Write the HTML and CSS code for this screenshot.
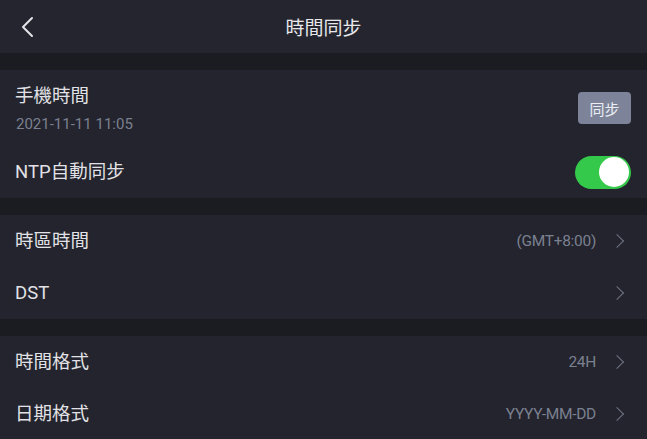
FILE: index.html
```html
<!DOCTYPE html>
<html lang="zh-Hant">
<head>
  <meta charset="UTF-8">
  <meta name="viewport" content="width=device-width, initial-scale=1.0">
  <title>時間同步</title>
  <link rel="stylesheet" href="styles.css">
</head>
<body>
  <header class="topbar">
    <button class="back" type="button" aria-label="返回">
      <svg width="14" height="22" viewBox="0 0 14 22"><path d="M12 2 L3 11 L12 20" fill="none" stroke="#e4e4e8" stroke-width="2" stroke-linecap="round" stroke-linejoin="round"/></svg>
    </button>
    <h1>時間同步</h1>
  </header>

  <main>
    <section class="group">
      <div class="row row-phone">
        <div class="info">
          <div class="label">手機時間</div>
          <div class="sub">2021-11-11 11:05</div>
        </div>
        <button class="sync" type="button">同步</button>
      </div>
      <div class="row">
        <div class="label">NTP自動同步</div>
        <span class="toggle on"><span class="knob"></span></span>
      </div>
    </section>

    <section class="group">
      <div class="row">
        <div class="label">時區時間</div>
        <div class="value">(GMT+8:00) <span class="chev"></span></div>
      </div>
      <div class="row">
        <div class="label">DST</div>
        <div class="value"><span class="chev"></span></div>
      </div>
    </section>

    <section class="group">
      <div class="row">
        <div class="label">時間格式</div>
        <div class="value">24H <span class="chev"></span></div>
      </div>
      <div class="row">
        <div class="label">日期格式</div>
        <div class="value">YYYY-MM-DD <span class="chev"></span></div>
      </div>
    </section>
  </main>
</body>
</html>
```

FILE: styles.css
```css
body {
  margin: 0;
  padding: 0;
  background-color: #1b1c22;
  color: #e6e6ea;
  font-family: Roboto, "Noto Sans CJK TC", sans-serif;
}
.topbar {
  height: 53px;
  background-color: #24252e;
  display: flex;
  align-items: center;
  justify-content: center;
  position: relative;
}
.topbar h1 {
  margin: 0;
  font-size: 19px;
  font-weight: normal;
  color: #e8e8ec;
}
.back {
  position: absolute;
  left: 20px;
  top: 16px;
  background: none;
  border: none;
  padding: 0;
  display: flex;
}
main {
  padding-top: 17px;
}
.group {
  background-color: #23242d;
  margin-bottom: 17px;
}
.row {
  height: 52px;
  display: flex;
  align-items: center;
  justify-content: space-between;
  padding: 0 16px 0 15px;
}
.row-phone {
  height: 76px;
}
.info {
  padding-top: 2px;
}
.label {
  font-size: 18.5px;
  line-height: 24px;
  color: #e2e2e6;
}
.sub {
  font-size: 15px;
  line-height: 20px;
  margin-top: 6px;
  padding-left: 1px;
  color: #7b8090;
}
.sync {
  width: 53px;
  height: 32px;
  border: none;
  border-radius: 4px;
  background-color: #7d8499;
  color: #eceef3;
  font-family: "Noto Sans CJK TC", sans-serif;
  font-size: 15px;
  padding: 0;
}
.toggle {
  width: 56px;
  height: 33px;
  border-radius: 17px;
  background-color: #34c94b;
  display: flex;
  align-items: center;
  justify-content: flex-end;
  padding: 0 2px;
  box-sizing: border-box;
}
.knob {
  width: 30px;
  height: 30px;
  border-radius: 50%;
  background-color: #fff;
}
.value {
  display: flex;
  align-items: center;
  gap: 16px;
  font-size: 15.5px;
  letter-spacing: -0.3px;
  color: #7b8090;
  padding-right: 9px;
}
.chev {
  width: 9px;
  height: 9px;
  border-top: 1.5px solid #6f7484;
  border-right: 1.5px solid #6f7484;
  transform: rotate(45deg);
}
```
